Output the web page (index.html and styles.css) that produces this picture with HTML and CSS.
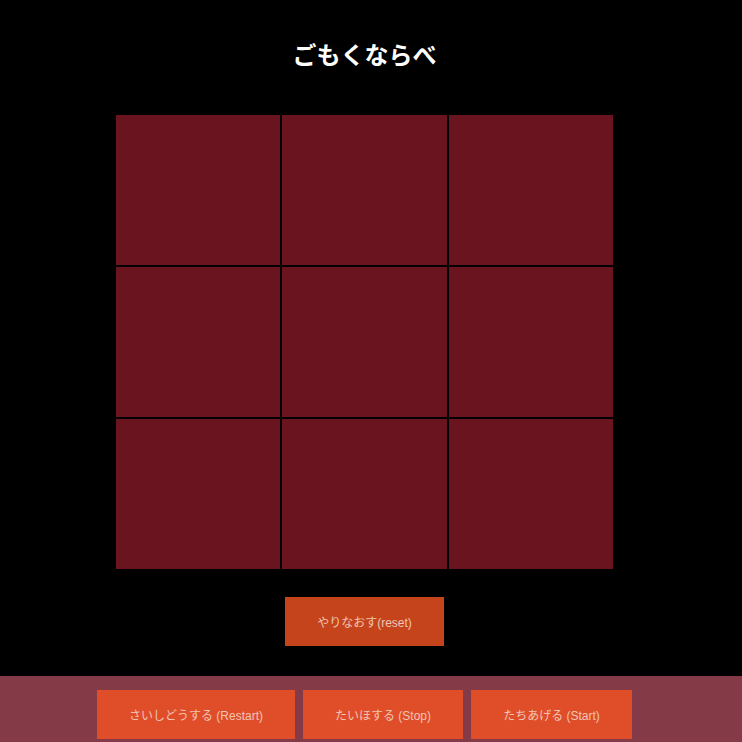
FILE: index.html
```html
<!DOCTYPE html>
<html lang="ja">
<head>
<meta charset="utf-8">
<title>ごもくならべ</title>
<link rel="stylesheet" href="styles.css">
</head>
<body>
<div class="page">
  <h1 class="title">ごもくならべ</h1>
  <div class="board">
    <div class="cell"></div><div class="cell"></div><div class="cell"></div>
    <div class="cell"></div><div class="cell"></div><div class="cell"></div>
    <div class="cell"></div><div class="cell"></div><div class="cell"></div>
  </div>
  <div class="reset-row">
    <button class="btn btn-reset">やりなおす(reset)</button>
  </div>
</div>
<footer class="footer">
  <div class="footer-inner">
    <button class="btn btn-foot btn-restart">さいしどうする (Restart)</button>
    <button class="btn btn-foot btn-stop">たいほする (Stop)</button>
    <button class="btn btn-foot btn-start">たちあげる (Start)</button>
  </div>
</footer>
</body>
</html>
```
FILE: styles.css
```css
html, body {
  margin: 0;
  padding: 0;
  background: #000;
  height: 100%;
  overflow: hidden;
}
body {
  font-family: "Liberation Sans", "Noto Sans CJK JP", sans-serif;
}
.page {
  width: 729px;
  display: flex;
  flex-direction: column;
  align-items: center;
}
.title {
  margin: 0;
  padding-top: 38px;
  height: 32px;
  line-height: 32px;
  font-size: 24px;
  font-weight: bold;
  color: #fff;
  font-family: "Noto Sans CJK JP", sans-serif;
}
.board {
  margin-top: 45px;
  width: 497px;
  display: grid;
  grid-template-columns: repeat(3, 1fr);
  grid-template-rows: repeat(3, 150px);
  gap: 2px;
}
.cell {
  background: #6a1420;
}
.reset-row {
  margin-top: 28px;
  display: flex;
  justify-content: center;
}
.btn {
  border: none;
  margin: 0;
  padding: 0;
  height: 49px;
  font-size: 12px;
  color: #f0c4b4;
  font-family: "Liberation Sans", "Noto Sans CJK JP", sans-serif;
}
.btn-reset {
  width: 159px;
  background: #c5441b;
}
.footer {
  margin-top: 30px;
  background: #843a47;
  height: 80px;
}
.footer-inner {
  width: 729px;
  padding-top: 14px;
  display: flex;
  justify-content: center;
  gap: 8px;
}
.btn-foot {
  background: #e04e29;
}
.btn-restart { width: 198px; }
.btn-stop { width: 160px; }
.btn-start { width: 161px; }
```
